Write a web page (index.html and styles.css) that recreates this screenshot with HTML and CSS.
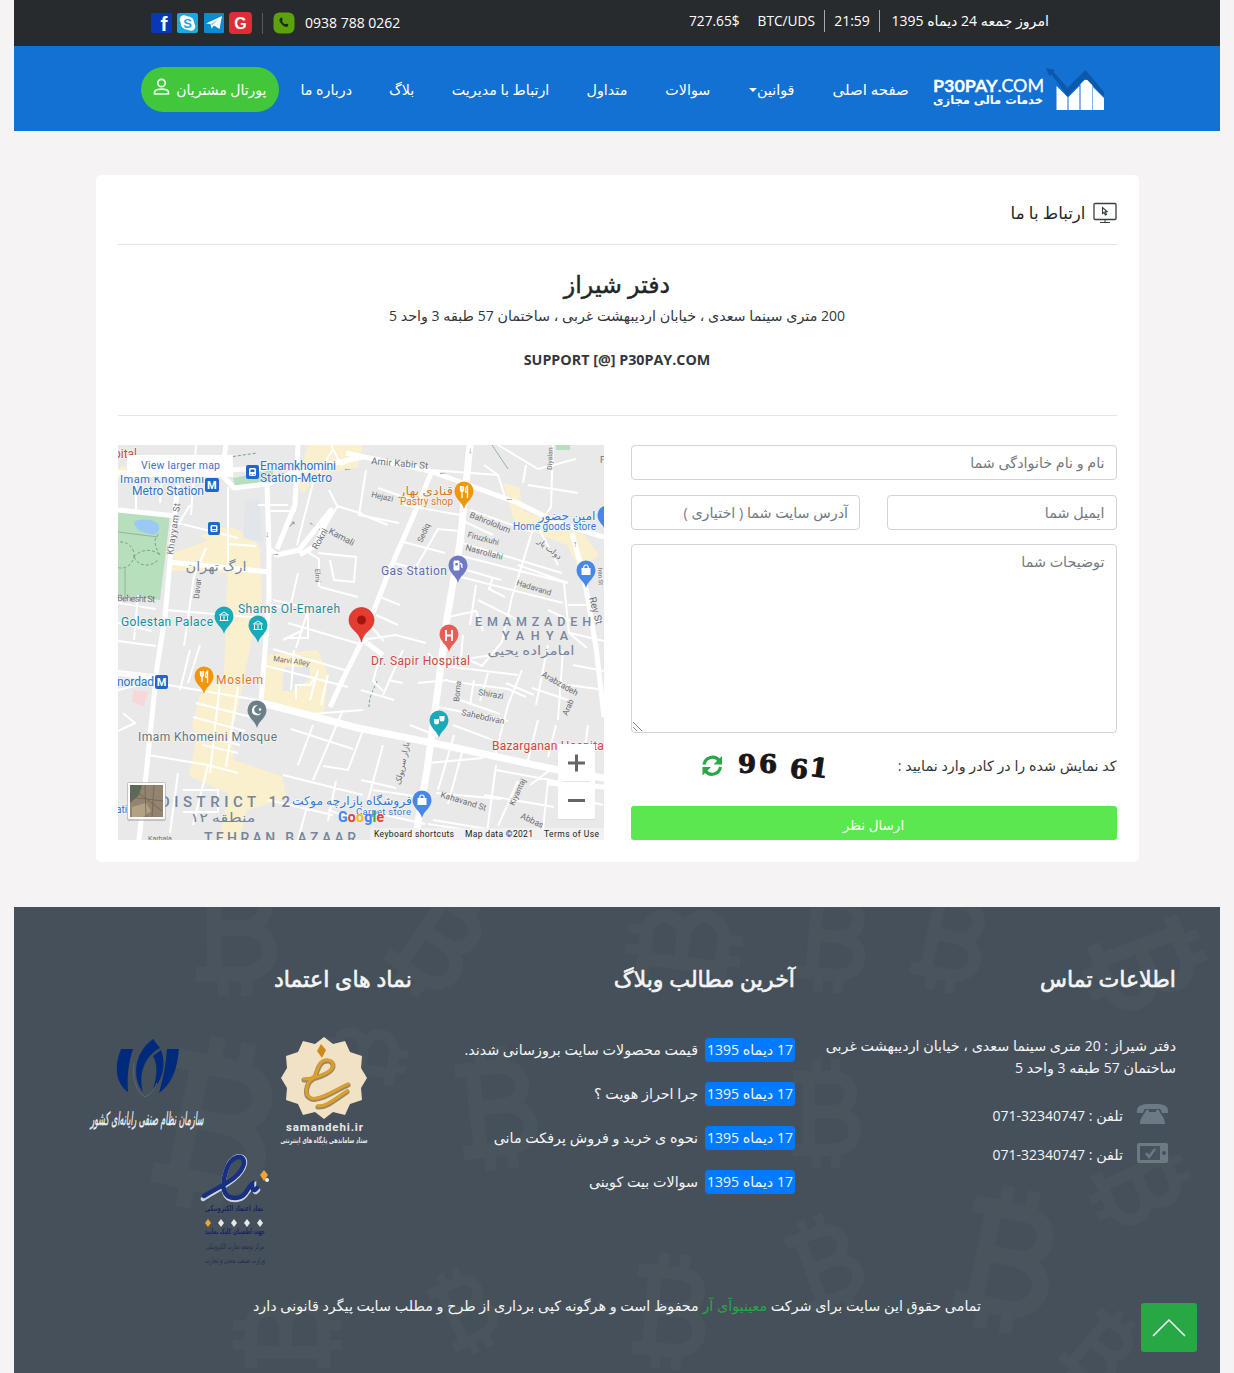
FILE: index.html
```html
<!DOCTYPE html>
<html lang="fa" dir="rtl">
<head>
<meta charset="utf-8">
<title>P30PAY.COM</title>
<link rel="stylesheet" href="styles.css">
</head>
<body>
<div class="page">
  <div class="topbar">
    <div class="today">
      <span class="date">امروز جمعه <b>24</b> دیماه <b>1395</b></span>
      <span class="clock"><b>21:59</b></span>
      <span class="rate" dir="ltr"><b>727.65$</b><b>BTC/UDS</b></span>
    </div>
    <div class="contact" dir="ltr">
      <svg class="social" width="101" height="24" viewBox="0 0 101 24">
        <rect x="0" y="2" width="21" height="20" rx="2" fill="#0a37b8"/>
        <text x="13" y="20" class="ic" font-size="21">f</text>
        <rect x="26" y="2" width="21" height="20" rx="2" fill="#19a9dc"/>
        <circle cx="36.5" cy="12" r="6.8" fill="#fff"/><circle cx="33" cy="8.500" r="4.300" fill="#fff"/><circle cx="40" cy="15.500" r="4.300" fill="#fff"/>
        <text x="36.500" y="17" class="ic blue" font-size="13">S</text>
        <rect x="53" y="2" width="20" height="20" rx="1" fill="#0c8ccf"/>
        <path d="M55 12.500 71 5l-2.500 13-5.500-3.500-2.500 3-1-4.500z" fill="#fff"/><path d="m59.500 13 8-5-6 6.500z" fill="#a9d4ec"/>
        <rect x="78" y="1" width="23" height="22" rx="4" fill="#df2c36"/>
        <text x="89.500" y="17.500" class="ic" font-size="16">G</text>
      </svg>
      <i class="bar"></i>
      <svg width="22" height="22" viewBox="0 0 22 22"><rect width="21" height="21" x=".5" y=".5" rx="6" fill="#5ba30b"/><path d="M7 6.500c1-1.500 2-1 2.500.5s-.7 1.500-.2 2.500 1.200 2 2.300 2.500 1.500-.8 2.700-.2 1.500 1.500.2 2.600c-1.500 1.200-4 .2-6-2.300S5.700 8.200 7 6.500z" fill="#1d2b12"/></svg>
      <b class="phone">0938 788 0262</b>
    </div>
  </div>

  <nav class="navbar">
    <svg class="logo" width="174" height="50" viewBox="0 0 174 50" direction="ltr">
      <path d="M125.500 21l11 11V45h-11zM137.500 32l11-11v24h-11zM149.500 19l4-4h3l5 5v25h-12zM162 22l11 11v12h-11z" fill="#fff"/>
      <path d="M115 3l9 2-1.500 1.800 14 16L154.500 5 173 27v5L154.500 13l-18 18.500L120.500 9.500l-2 2z" fill="#0c58ad"/>
      <text x="2" y="26.500" textLength="111" lengthAdjust="spacingAndGlyphs" class="brand"><tspan font-weight="700">P30PAY</tspan>.COM</text>
      <text x="57" y="38.500" textLength="110" lengthAdjust="spacingAndGlyphs" class="tag" text-anchor="middle">خدمات مالی مجازی</text>
    </svg>
    <a class="w77">صفحه اصلی</a>
    <a class="w47">قوانین<i class="caret"></i></a>
    <a class="w45">سوالات</a>
    <a class="w41">متداول</a>
    <a class="w97">ارتباط با مدیریت</a>
    <a class="w26">بلاگ</a>
    <a class="w50">درباره ما</a>
    <a class="portal">پورتال مشتریان
      <svg width="17" height="18" viewBox="0 0 17 18" fill="none" stroke="#e9fbe6" stroke-width="1.700"><circle cx="8.500" cy="5" r="3.700"/><path d="M1.500 16v-1.500c0-2 3-3.300 7-3.300s7 1.300 7 3.300V16z" stroke-linejoin="round"/></svg>
    </a>
  </nav>

  <main class="card">
    <h1 class="title">
      <svg width="24" height="22" viewBox="0 0 24 22" fill="none" stroke="#3b3f42"><rect x="1" y="1.500" width="22" height="16" rx="1" stroke-width="1.300"/><path d="M12 18v2M7 20.500h10"/><path d="M9.500 5.500v6l1.500-1.200 1.300 2.700 1.200-.6-1.200-2.600h2z" stroke-width="1.100"/></svg>
      <span>ارتباط با ما</span>
    </h1>
    <section class="office">
      <h2>دفتر شیراز</h2>
      <p class="addr"><b>200</b> متری سینما سعدی ، خیابان اردیبهشت غربی ، ساختمان <b>57</b> طبقه <b>3</b> واحد <b>5</b></p>
      <p class="mail" dir="ltr">SUPPORT [@] P30PAY.COM</p>
    </section>
    <section class="columns">
      <form class="form">
        <div class="field">نام و نام خانوادگی شما</div>
        <div class="pair">
          <div class="field">ایمیل شما</div>
          <div class="field">آدرس سایت شما ( اختیاری )</div>
        </div>
        <div class="field area">توضیحات شما
          <svg class="grip" width="9" height="9" viewBox="0 0 9 9" stroke="#777" stroke-width=".9"><path d="M0 0l9 9M0 5l4 4"/></svg>
        </div>
        <div class="captcha">
          <span>کد نمایش شده را در کادر وارد نمایید :</span>
          <svg width="128" height="32" viewBox="0 0 128 32" direction="ltr">
            <g fill="none" stroke="#28a745" stroke-width="3.200"><path d="M2 14.500C3.500 6.500 13 5 17 10.500M18.500 17C17 25 7.500 26.500 3.500 21"/></g>
            <path d="M20 6v8.500h-8.500zM.5 25.500V17H9z" fill="#28a745"/>
            <g class="code"><text x="36" y="23">9</text><text x="57" y="23">6</text><text x="88" y="28" transform="rotate(5 97 18)">6</text><text x="108" y="27" transform="rotate(8 118 18)">1</text></g>
          </svg>
        </div>
        <a class="send">ارسال نظر</a>
      </form>

      <svg class="map" width="486" height="395" viewBox="0 0 486 395" direction="ltr">
        <rect width="486" height="395" fill="#e9e9ea"/>
        <!-- commercial areas -->
        <g fill="#fdf1c9">
          <path d="M190 0h55l-5 22-40 8-14 18-8-8zM0 22l58-4v10L0 36zM90 95l-8-4 20-8 14 0 18 8 8 12 2 65-12 4-3-40-34-6-42 0 3-18zM110 118l25 5 4 45-20 100-12 40-28-10-5-18 8-30 24-20zM150 210l50-5 10 25-4 40-40-5-25-15zM85 262l26 8 5 45 48 16 5 22-40 12-8 30h-20l10-46-40-18zM385 38l16 4 4 24 60 22 16 22-20 14-12-24-52-20z" opacity=".85"/>
        </g>
        <path d="M166 222h26v12l-18 12h-10z" fill="#e6e7ea"/>
        <path d="M0 67l52 4-10 84-42-5zM115 33l40-8v12l-38 4zM438 0h14v5h-14z" fill="#b7dfbc"/>
        <path d="M16 77c7-5 24-2 25 4s-3 10-9 8-14-2-16-12z" fill="#9bc8f5"/>
        <path d="M127 56l14-3 4 45-20-5z" fill="#e2e5ea"/>
        <path d="M15 245l15 2-4 15-12-5z" fill="#f7d8d8"/>
        <g fill="none" stroke="#71a780" stroke-dasharray="3 2"><circle cx="3" cy="110" r="13"/><path d="M16 112c6-8 18-9 26-2M16 112c5 10 17 11 25 2M42 110c-5-8-8-16 0-22M105 13l34-5M192 78l12 8M259 236c-5 12-8 16-8 26"/></g>
        <g fill="none" stroke="#91b69b"><path d="M7 152V122M0 87l40 5M374 0l16 24"/></g>
        <!-- local streets -->
        <g fill="none" stroke="#fff" stroke-width="2">
          <path d="M18 30v36M44 32l-2 26M78 0l-5 70M110 42v76M60 78l60 15M72 60L60 80M110 99l28 2M88 103l-12 28-10 70M48 165l95 8M20 150l-4 45M140 60h30M152 66h26M195 38l-16 62M211 45l8 16 26 8M220 60l-22 38-7 10 10 6 0 28M200 108l38 4-2 25-20-2-4-20M180 128l-8 35-20-3M202 142l38 10M190 165l-12 38M170 178l75 22M155 155l35 8v30h-20M213 0l10 20 22-10M195 38l20-34"/>
          <path d="M0 158l38 6M0 178l34 8M0 196l38 5M0 226l36 4M0 245l34-8M5 268l12 10-17 8M50 240l90 15M72 205l-10 40M82 200l-12 38M102 238l-10 90M120 242l-12 80M78 258l55 14M75 272l52 14M72 288l50 12M85 300l35 8M30 310l60 10 30 8M90 320l-15 60M60 328l-8 60M65 345h35v22H65M145 220l85 22M155 204l75 22M176 205l-3 40M200 225l-8 30M178 254l0-14 14 0 8-12M165 195l20-10M210 230l-7 30M180 270l65-5M173 284l62 20M195 280l-15 40M225 265l-30 70M165 330l80 20M150 355l65 15M192 350l-12 45M218 336l-8 40"/>
          <path d="M248 25l-7 45 40 8M245 70l25 10M260 43l40 14M286 60l56 10M282 96l45 12M275 118l40 10M298 122l22-38 22 2M262 152l20 8M258 170l22 10M243 195l35-5 30 8M252 180l14 16M312 25l68 5 8 25M366 20l14 10M352 65l62 22-20 65-10 45-20 24-15-7M345 76l30 14M344 98l100 30M340 110l105 27M335 130l110 28M420 82l20 38M400 120l50 18M375 132l-4 12 16 8M360 155l40 20M348 125l35 10M358 140l-6 40M435 0l-2 62-18 25M410 40l50 8M380 0l40 24 38-10M408 20l-3 18M446 138l5 50 18 15M450 160h20M430 165l25 12M470 175l14 2M330 172l28-6 7 20M345 190l-2 22M262 212l-7 24 10 10M270 235l15 3M243 245l33 10M285 205l-20 45M310 208l10 10 55-8M318 220l82 10M300 238l30-3M330 236l60 8 18 8M356 235l-4 25M370 228l-8 28M342 255l40 14M320 262l70 14M335 280l40 15M292 280l30 12M310 318l55-5M318 348l65 6M336 290l-16 55M345 304l-15 55M378 320l-10 75M388 238l28 12M404 225l-14 35-14 55M430 200l-12 60M445 205l-5 70M414 243l36 12M450 240l30 4M420 275l-10 40M438 280l-8 32M378 325l65 12M412 340l20-15 40 10M366 350l70 12M400 336l-20 45M430 335l-5 50M445 350l40 10M470 280l-8 60M452 188l34 8M455 220l31 6M245 285l-15 40-25-4M243 335l35 8M265 300l-15 55M255 345l55 8M245 365l62 14M315 375l60 10M350 385l-40-6M240 375l-30-10"/>
        </g>
        <!-- main roads -->
        <g fill="none" stroke="#fff" stroke-width="5" stroke-linejoin="round">
          <path d="M0 65l58 6M60 40l-5 42-8 90-8 50-12 118-6 55M108 0l-4 30 12 13 33-4 2 65 8 6 22-5 32-40-15 35-16 10M151 104l0 50-8 103M50 117l102 10M180 0l-3 60-18 44M0 28h58M60 28l85-5M148 40l30-14 67-14M0 228l36 6"/>
          <path d="M228 8l84 18 88 32 40 20 46 14M314 26l-20 48-22 50-14 36-16 40-16 32-14 30M454 88l12 44 12 70 8 70M245 195l20 15M430 338l56 4"/>
        </g>
        <g fill="none" stroke="#fff" stroke-width="7"><path d="M352 0l-10 98-13 75-9 70-11 82-12 70M140 257l100 26 80 16 120 26 46 8"/></g>
        <g fill="#848ba1" font-size="9" class="r"><text x="147" y="92">↓</text><text x="170" y="82">↗</text><text x="153" y="111">→</text><text x="320" y="30">←</text><text x="387" y="56">←</text><text x="455" y="102">↑</text><text x="225" y="26">←</text><text x="350" y="8">↓</text></g>
        <!-- street names -->
        <g class="street">
          <text transform="translate(55 110) rotate(-82)" textLength="52">Khayyam St</text><text transform="translate(-1 156) rotate(2)" textLength="38">Behesht St</text>
          <text transform="translate(81 154) rotate(-84)" font-size="8">Davar</text><text transform="translate(199 105) rotate(-60)" font-size="9">Rokni</text><text transform="translate(210 88) rotate(28)" font-size="9">Kamali</text><text transform="translate(197 124) rotate(88)" font-size="7">Elmi</text>
          <text transform="translate(253 19) rotate(5)" textLength="57" font-size="9.500">Amir Kabir St</text><text transform="translate(253 52) rotate(12)" font-size="8">Hejazi</text><text transform="translate(304 98) rotate(-66)" font-size="8">Sediq</text>
          <text transform="translate(351 72) rotate(22)" font-size="8.500">Bahrololum</text><text transform="translate(349 92) rotate(15)" font-size="8">Firuzkuhi</text><text transform="translate(347 105) rotate(15)" font-size="8.500">Nasrollahi</text><text transform="translate(398 140) rotate(17)" font-size="8">Hadavand</text>
          <text transform="translate(434 25) rotate(-88)" font-size="7">Diyalan</text><text transform="translate(471 153) rotate(75)" font-size="10">Rey St</text><text transform="translate(480 123) rotate(87)" font-size="6">Iran St</text><text x="482" y="18">F</text>
          <text transform="translate(155 216) rotate(8)" font-size="7.500">Marvi Alley</text><text transform="translate(341 257) rotate(-84)" font-size="8">Borna</text><text transform="translate(360 250) rotate(9)" font-size="8.500">Shirazi</text><text transform="translate(343 270) rotate(12)" font-size="8.500">Sahebdivan</text><text transform="translate(423 231) rotate(30)" font-size="8.500">Arabzadeh</text><text transform="translate(449 271) rotate(-65)" font-size="8">Arab</text><text transform="translate(322 352) rotate(17)" font-size="8.500">Kahavand St</text><text transform="translate(396 361) rotate(-65)" font-size="8">Kiyantaj</text><text transform="translate(402 373) rotate(25)" font-size="8.500">Abbas</text><text x="30" y="396" font-size="7">Karbala</text>
          <text transform="translate(287 319) rotate(-78)" font-size="8" text-anchor="middle">بازار سرپولک</text><text transform="translate(430 106) rotate(38)" font-size="8" text-anchor="middle">دولت یار</text>
        </g>
        <!-- districts -->
        <g class="district">
          <text x="98" y="126" text-anchor="middle" textLength="61" lengthAdjust="spacingAndGlyphs" font-size="13">ارگ   تهران</text>
          <text x="357" y="181" textLength="116">EMAMZADEH</text><text x="384" y="195" textLength="66">YAHYA</text><text x="413" y="210" text-anchor="middle" textLength="87" lengthAdjust="spacingAndGlyphs">امامزاده یحیی</text>
          <text x="42" y="362" textLength="130" font-size="15">DISTRICT 12</text><text x="105" y="377" text-anchor="middle" textLength="65" lengthAdjust="spacingAndGlyphs">منطقه ۱۲</text><text x="86" y="398" textLength="152" font-size="14">TEHRAN BAZAAR</text>
        </g>
        <!-- places -->
        <g class="place">
          <g fill="#2f72c8"><text x="2" y="38" font-size="11" textLength="84">Imam Khomeini</text><text x="14" y="50" textLength="72">Metro Station</text><text x="142" y="25" textLength="76">Emamkhomini</text><text x="142" y="37" textLength="72">Station-Metro</text><text x="-1" y="241" textLength="37">nordad</text><text x="-2" y="368" font-size="10">ati</text></g>
          <g fill="#198d9b"><text x="3" y="181" textLength="92">Golestan Palace</text><text x="120" y="168" textLength="102">Shams Ol-Emareh</text></g>
          <g fill="#cf4543"><text x="253" y="220" textLength="99">Dr. Sapir Hospital</text><text x="374" y="305" textLength="115">Bazarganan Hospital</text><text x="-4" y="13">pital</text></g>
          <g fill="#d97b1d"><text x="308" y="50" text-anchor="middle" textLength="54" lengthAdjust="spacingAndGlyphs">قنادی بهار</text><text x="282" y="60" font-size="10" textLength="53">Pastry shop</text><text x="98" y="239" textLength="47">Moslem</text></g>
          <g fill="#3778d0"><text x="449" y="75" text-anchor="middle" textLength="57" lengthAdjust="spacingAndGlyphs">امین حضور</text><text x="395" y="85" font-size="10" textLength="83">Home goods store</text><text x="234" y="360" text-anchor="middle" textLength="120" lengthAdjust="spacingAndGlyphs">فروشگاه بازارچه موکت</text><text x="238" y="370" font-size="9.500" textLength="55">Carpet store</text></g>
          <text x="263" y="130" textLength="66" fill="#6269b5">Gas Station</text><text x="20" y="296" textLength="139" fill="#65747c">Imam Khomeini Mosque</text>
        </g>
        <!-- transit badges -->
        <g fill="#1b69cf"><rect x="87" y="33" width="14" height="14" rx="2"/><rect x="128" y="20" width="13" height="14" rx="2"/><rect x="90" y="77" width="12" height="13" rx="2"/><rect x="37" y="230" width="13" height="14" rx="2"/></g>
        <g fill="#fff" class="r" font-weight="700" font-size="11"><text x="89" y="44">M</text><text x="38.700" y="241">M</text></g>
        <g fill="#fff"><rect x="131" y="23" width="7" height="8" rx="1.500"/><rect x="92.500" y="80" width="7" height="7" rx="1.500"/></g>
        <g fill="#1b69cf"><path d="M132.500 24.500h4v2.500h-4zM132.500 29h1v1h-1zM135.500 29h1v1h-1zM94 81.500h4V84h-4zM94 85.200h4v.8h-4z"/></g>
        <!-- pins -->
        <defs><path id="pin" d="M0 17C-1.500 10-9.500 7-9.500-1A9.500 9.500 0 0 1 9.500-1C9.500 7 1.500 10 0 17z"/></defs>
        <use href="#pin" x="106" y="172" fill="#18aabb"/><use href="#pin" x="140" y="181" fill="#18aabb"/>
        <g fill="none" stroke="#fff"><path d="M101.500 170l4.500-3 4.500 3zM102.500 171v4M106 171v4M109.500 171v4M101.500 175.500h9M135.500 179l4.500-3 4.500 3zM136.500 180v4M140 180v4M143.500 180v4M135.500 184.500h9"/></g>
        <use href="#pin" x="346" y="47" fill="#ef9708"/><use href="#pin" x="86" y="232" fill="#ef9708"/>
        <path d="M342.500 41v4q0 1.500 1.500 1.500V53M344 41v5M345.500 41v4q0 1.500-1.500 1.500M349.500 53V41q-2 1-2 6h2M82.500 226v4q0 1.500 1.500 1.500V237M84 226v5M85.500 226v4q0 1.500-1.500 1.500M89.500 238v-12q-2 1-2 6h2" fill="none" stroke="#fff" stroke-width="1.300"/>
        <use href="#pin" x="340" y="121" fill="#7079c4"/><path d="M336 116h5v9h-5zM342 118l2 1v4M337.500 117.500h2" fill="#fff" stroke="#fff"/><path d="M337.300 118h2.500v2.500h-2.500z" fill="#7079c4"/>
        <use href="#pin" x="468" y="126" fill="#4688e8"/><path d="M463.500 123h9v7h-9z" fill="#fff"/><path d="M465.700 123c0-4 4.600-4 4.600 0" fill="none" stroke="#fff" stroke-width="1.200"/>
        <use href="#pin" x="489" y="71" fill="#4688e8"/>
        <use href="#pin" x="304" y="356" fill="#4688e8"/><path d="M299.500 353h9v7h-9z" fill="#fff"/><path d="M301.700 353c0-4 4.600-4 4.600 0" fill="none" stroke="#fff" stroke-width="1.200"/>
        <use href="#pin" x="331" y="190" fill="#e85d55"/><path d="M328 185v11M334 185v11M328 190.500h6" stroke="#fff" stroke-width="1.800"/>
        <use href="#pin" x="321" y="276" fill="#18aabb"/><path d="M316 274h5v3a2.500 2.500 0 0 1-5 0zM321.500 271h5v3a2.500 2.500 0 0 1-5 0z" fill="#fff"/>
        <use href="#pin" x="139" y="266" fill="#6b7f89"/><path d="M140 260.500a5 5 0 1 0 3.500 7 4.200 4.200 0 1 1-3.500-7z" fill="#fff"/><circle cx="142" cy="264.500" r="1.200" fill="#fff"/>
        <path d="M243.500 197c-2-11-12.500-12-12.500-22a12.500 12.500 0 0 1 25 0c0 10-10.500 11-12.500 22z" fill="#e43c31" stroke="#bf352c" stroke-width=".7"/><circle cx="243.500" cy="175" r="4.500" fill="#a4150f"/>
        <!-- map controls -->
        <g class="r" font-size="14"><text x="220" y="377" textLength="46" font-weight="700"><tspan fill="#4285f4">G</tspan><tspan fill="#e54135">o</tspan><tspan fill="#f5ba16">o</tspan><tspan fill="#4285f4">g</tspan><tspan fill="#34a853">l</tspan><tspan fill="#e54135">e</tspan></text></g>
        <rect x="252" y="383" width="234" height="12" fill="#f2f2f2" opacity=".85"/>
        <g class="r" font-size="8.500" fill="#222"><text x="256" y="392" textLength="80">Keyboard shortcuts</text><text x="347" y="392" textLength="68">Map data ©2021</text><text x="426" y="392" textLength="55">Terms of Use</text></g>
        <rect x="9" y="10" width="106" height="22" fill="#fff"/><text x="23" y="24" class="r" font-size="10.500" textLength="79" fill="#4a6ecb">View larger map</text>
        <rect x="440" y="300" width="37" height="75" rx="1" fill="#c9c9c9" opacity=".5"/><rect x="440" y="299" width="37" height="75" rx="1" fill="#fff"/><path d="M445 336.500h27" stroke="#e3e3e3"/><path d="M450 318h17M458.500 309.500v17M450 355.500h17" stroke="#666" stroke-width="3"/>
        <rect x="9" y="337" width="39" height="39" rx="2" fill="#aaa" opacity=".6"/><rect x="10" y="338" width="37" height="36" fill="#fff"/><rect x="12" y="340" width="33" height="32" fill="#93836f"/><path d="M12 340h12l-3 10-9 8z" fill="#5d6858"/><path d="M14 362l14-4 5 8-8 6H14z" fill="#b3a184"/><path d="M27 340l1 32M12 352l33 4M36 340l-2 32M18 346l26 20" stroke="#6d6356" stroke-width=".8"/>
      </svg>
    </section>
  </main>

  <footer class="footer">
    <svg class="coins" width="1206" height="466" viewBox="14 907 1206 466">
      <defs><g id="coin" fill="none" stroke="#49545c" stroke-width="17"><path d="M-44-48H8C42-48 42-2 6-2H-22M6-2C50-2 48 49 8 49H-44M-23-48V49"/><path d="M-13-72v24M13-72v24M-13 49v24M13 49v24" stroke-width="13"/></g></defs>
      <use href="#coin" transform="translate(235 930) scale(.9)"/><use href="#coin" transform="translate(438 942) rotate(35) scale(.8)"/><use href="#coin" transform="translate(216 1125) rotate(12) scale(1.200)"/><use href="#coin" transform="translate(364 1055) rotate(-80) scale(.6)"/><use href="#coin" transform="translate(496 1108) rotate(-6) scale(.85)"/><use href="#coin" transform="translate(287 1335) rotate(-90) scale(.75)"/><use href="#coin" transform="translate(465 1310) rotate(-25) scale(.6)"/>
      <use href="#coin" transform="translate(684 945) rotate(-83) scale(.8)"/><use href="#coin" transform="translate(832 938) rotate(5) scale(.75)"/><use href="#coin" transform="translate(950 938) rotate(12) scale(.75)"/><use href="#coin" transform="translate(1145 965) rotate(70) scale(.85)"/><use href="#coin" transform="translate(826 1113) scale(.75)"/><use href="#coin" transform="translate(1007 1259) rotate(12)"/><use href="#coin" transform="translate(826 1265) rotate(-20) scale(.7)"/><use href="#coin" transform="translate(670 1311) rotate(5) scale(.8)"/><use href="#coin" transform="translate(1140 1187) rotate(65) scale(.7)"/><use href="#coin" transform="translate(1100 1350) rotate(40) scale(.6)"/>
    </svg>
    <div class="fcols">
      <section class="info">
        <h3>اطلاعات تماس</h3>
        <p>دفتر شیراز : <b>20</b> متری سینما سعدی ، خیابان اردیبهشت غربی<br>ساختمان <b>57</b> طبقه <b>3</b> واحد <b>5</b></p>
        <div class="tel"><svg width="33" height="22" viewBox="0 0 33 22" fill="#6c7a86"><path d="M1 10C-.5 1 8 1 16.500 1S33.500 1 32 10h-6c-1-2-.5-3-2-4H9C7.500 7 8 8 7 10z"/><path d="M10 7h3v2h7V7h3c1 4 6 7 6 14H4c0-7 5-10 6-14z"/></svg><span>تلفن : <b dir="ltr">071-32340747</b></span></div>
        <div class="tel"><svg width="33" height="22" viewBox="0 0 33 22"><path fill="#6c7a86" fill-rule="evenodd" d="M3 1h27q2 0 2 2v16q0 2-2 2H3q-2 0-2-2V3q0-2 2-2zM4 4v14h20V4z"/><circle cx="28" cy="11" r="2" fill="#46505a"/><path d="M10 11l3 4 6-8" fill="none" stroke="#6c7a86" stroke-width="2.500"/></svg><span>تلفن : <b dir="ltr">071-32340747</b></span></div>
      </section>
      <section class="blog">
        <h3>آخرین مطالب وبلاگ</h3>
        <div class="post"><em><b>17</b> دیماه <b>1395</b></em><span>قیمت محصولات سایت بروزسانی شدند.</span></div>
        <div class="post"><em><b>17</b> دیماه <b>1395</b></em><span>جرا احراز هویت ؟</span></div>
        <div class="post"><em><b>17</b> دیماه <b>1395</b></em><span>نحوه ی خرید و فروش پرفکت مانی</span></div>
        <div class="post"><em><b>17</b> دیماه <b>1395</b></em><span>سوالات بیت کوینی</span></div>
      </section>
      <section class="trust">
        <h3>نماد های اعتماد</h3>
        <svg class="seals" width="290" height="240" viewBox="85 1035 290 240" direction="ltr">
          <path d="M121 1052h12c-5 15-6 28-5 43-11-8-15-23-7-43zM167 1052h12c-2 18-5 33-20 44 4-14 7-29 8-44zM153 1042l7 9c-15 8-22 25-17 44-10-12-11-38 10-53zM161 1053c5 12 3 28-8 40 4-14 5-26 0-34z" fill="#002b7d"/>
          <path d="M134 1066c-2 16 2 28 11 34 6-3 9-7 12-14" fill="none" stroke="#5d6874"/>
          <text x="147" y="1128" text-anchor="middle" class="nast" textLength="113" lengthAdjust="spacingAndGlyphs">سازمان نظام صنفی رایانه‌ای کشور</text>
          <path d="M324 1040l9 7 12-3 5 11 12 4-1 12 6 10-6 10 1 12-12 4-5 11-12-3-9 7-9-7-12 3-5-11-12-4 1-12-6-10 6-10-1-12 12-4 5-11 12 3z" fill="#f1e2c5"/>
          <path d="M321 1047l5 6-4 8-5-7z" fill="#ce8a19"/>
          <g fill="none" stroke-linecap="round"><path d="M304 1083c9 0 28-6 29-13s-9-8-13-2-3 12-8 15-9 16-1 19 24-8 37-14M318 1110c8 1 17-7 29-15" stroke="#9c8863" stroke-width="5"/><path d="M304 1082c9 0 28-6 29-13s-9-8-13-2-3 12-8 15-9 16-1 19 24-8 37-14M318 1109c8 1 17-7 29-15" stroke="#dda02b" stroke-width="3"/></g>
          <text x="286" y="1134" class="r" font-size="11.500" font-weight="700" fill="#e6e8ea" textLength="77">samandehi.ir</text>
          <text x="324" y="1146" text-anchor="middle" font-size="8" font-weight="700" fill="#e6e8ea" class="fa" textLength="87" lengthAdjust="spacingAndGlyphs">ستاد ساماندهی پایگاه های اینترنتی</text>
          <g fill="none" stroke-linecap="round"><path d="M203 1202c14-9 40-20 42-36 0-11-14-9-19 8s-3 29 9 29 12-11 19-15c0 7 1 9 4 5" stroke="#cfd3e5" stroke-width="4.500"/><path d="M204 1199c14-9 38-18 40-33 0-10-13-8-18 8s-3 27 9 27 12-11 17-14c0 6 2 8 5 4" stroke="#17307f" stroke-width="4.500"/></g>
          <path d="M264 1173l4 5-4 6-4-6z" fill="#f3a32f"/><circle cx="267" cy="1183" r="2" fill="#eee"/>
          <g class="fa seal-text"><text x="234" y="1214" textLength="58" lengthAdjust="spacingAndGlyphs">نماد اعتماد الکترونیکی</text><text x="235" y="1237" textLength="60" lengthAdjust="spacingAndGlyphs">جهت اطمینان کلیک نمایید</text><text x="235" y="1252" textLength="58" lengthAdjust="spacingAndGlyphs" class="dim">مرکز توسعه تجارت الکترونیکی</text><text x="235" y="1266" textLength="60" lengthAdjust="spacingAndGlyphs" class="dim">وزارت صنعت معدن و تجارت</text></g>
          <path d="M208 1222l3 4-3 4-3-4z" fill="#f3a32f"/><path d="M221 1222l3 4-3 4-3-4zM234 1222l3 4-3 4-3-4zM247 1222l3 4-3 4-3-4zM260 1222l3 4-3 4-3-4z" fill="#e8e8e8"/>
        </svg>
      </section>
    </div>
    <p class="copy">تمامی حقوق این سایت برای شرکت <a>معینیوآی آر</a> محفوظ است و هرگونه کپی برداری از طرح و مطلب سایت پیگرد قانونی دارد</p>
    <a class="totop"><svg width="34" height="19" viewBox="0 0 34 19" fill="none" stroke="#fff" stroke-width="1.500"><path d="M1 18L17 2l16 16"/></svg></a>
  </footer>
</div>
</body>
</html>
```
FILE: styles.css
```css
* { box-sizing: border-box; }
body { margin: 0; background: #f5f3f4; color: #212529; font: 14.300px/22px "Open Sans", "DejaVu Sans", sans-serif; }
h1, h2, h3, p { margin: 0; font-weight: 400; }
b { font-weight: 400; font-size: 14px; }
svg { display: block; flex: none; }
.page { width: 1206px; height: 1373px; margin: 0 auto; overflow: hidden; display: flex; flex-direction: column; }

.topbar { height: 46px; background: #282b2e; color: #fff; display: flex; justify-content: space-between; padding: 0 171px 0 138px; align-items: center; white-space: nowrap; }
.today { display: flex; align-items: center; height: 22px; margin-top: -4px; }
.date { width: 170px; border-left: 1px solid #aaa; font-size: 14.200px; }
.clock { width: 55px; text-align: center; border-left: 1px solid #aaa; }
.rate { display: flex; gap: 18px; padding-right: 9px; }
.rate b { font-size: 13.700px; }
.contact { display: flex; align-items: center; margin-left: -1px; }
.bar { width: 1px; height: 21px; background: #555b60; margin: 0 10px 0 10px; }
.phone { margin-left: 10px; }
.ic { font-family: "Liberation Sans", sans-serif; font-weight: 700; fill: #fff; text-anchor: middle; }
.blue { fill: #19a9dc; }

.navbar { height: 85px; background: #1371d3; color: #fff; display: flex; align-items: center; padding: 2px 115px 0 0; gap: 37.400px; white-space: nowrap; }
.navbar a { display: flex; justify-content: center; align-items: center; flex: none; }
.logo { margin-left: -15px; }
.brand { font-family: Lato, sans-serif; font-size: 17.500px; fill: #fff; stroke: #fff; stroke-width: .3px; }
.tag { font: 700 12px "DejaVu Sans", sans-serif; fill: #fff; }
.w77 { width: 76px; font-size: 15px; margin-top: -2px; }
.w47 { width: 47px; }
.w45 { width: 46px; }
.w41 { width: 41px; }
.w97 { width: 97px; }
.w26 { width: 26px; }
.w50 { width: 50px; }
.caret { border: 4px solid transparent; border-top-color: #fff; border-bottom: 0; }
.navbar .portal { width: 138px; height: 45px; border-radius: 23px; background: #42c73c; gap: 6px; margin-right: -15px; font-size: 14px; }
.portal svg { margin-top: -5px; }

.card { width: 1043px; height: 687px; margin: 44px auto 0; background: #fff; border-radius: 5px; padding: 0 22px; }
.title { height: 70px; border-bottom: 1px solid #e6e6e6; display: flex; align-items: center; gap: 7px; padding-top: 6px; font-size: 16.600px; }
.office { height: 171px; border-bottom: 1px solid #e6e6e6; text-align: center; padding-top: 23px; }
.office h2 { font-size: 23.700px; line-height: 32px; -webkit-text-stroke: .4px; }
.addr { line-height: 30px; color: #33373b; margin-top: 1px; }
.mail { font-size: 14.300px; font-weight: 700; margin-top: 18px; color: #33373b; }
.columns { display: flex; gap: 27px; padding-top: 29px; }
.form { width: 486px; display: flex; flex-direction: column; gap: 14.500px; }
.field { position: relative; flex: 0 0 35px; height: 35px; border: 1px solid #ced4da; border-radius: 4px; padding: 6px 11px; color: #737a81; white-space: nowrap; }
.pair { display: flex; gap: 27px; }
.pair .field { flex: 1; }
.form .area { flex-basis: 188.500px; }
.grip { position: absolute; left: 1px; bottom: 1px; }
.captcha { height: 44.500px; display: flex; align-items: center; padding-bottom: 7px; color: #33373b; gap: 66px; }
.captcha span { width: 221px; white-space: nowrap; }
.captcha svg { overflow: visible; }
.code { font: 900 26px "DejaVu Serif", serif; fill: #171717; stroke: #171717; stroke-width: 1px; }
.form .send { height: 34px; border-radius: 3px; background: #59e84f; color: #fff; text-align: center; padding-top: 8px; font-size: 13.500px; }
.r { font-family: Roboto, sans-serif; }
.street { font: 9px Roboto, "DejaVu Sans", sans-serif; fill: #6b6e73; }
.district { font: 500 12.500px Roboto, "DejaVu Sans", sans-serif; fill: #76859a; }
.place { font: 12px Roboto, "DejaVu Sans", sans-serif; paint-order: stroke; stroke: #f5f5f5; stroke-width: 1.500px; }

.footer { position: relative; margin-top: 45px; height: 466px; background: #46505a; color: #f4f5f6; }
.coins { position: absolute; inset: 0; }
.fcols { position: relative; display: flex; height: 374px; padding: 53px 44px 0 0; }
.fcols h3 { font-size: 22.100px; line-height: 36px; -webkit-text-stroke: .6px; white-space: nowrap; }
.info { width: 381px; }
.info p { margin: 39px 0 17px; white-space: nowrap; }
.tel { display: flex; align-items: center; height: 39px; padding-right: 7px; gap: 13px; }
.tel svg { margin-top: -3px; }
.blog { width: 383px; }
.blog h3, .trust h3 { margin-bottom: 36px; }
.post { display: flex; align-items: center; gap: 7px; height: 44px; white-space: nowrap; }
.post em { font-style: normal; background: #007bff; border-radius: 4px; width: 90px; height: 24px; line-height: 23px; text-align: center; }
.blog .post:first-of-type { margin-top: -4px; }
.trust { width: 341px; }
.seals { margin: 39px 37px 0 0; }
.trust h3 + .seals { margin-top: 6px; }
.nast { font: italic 18px "DejaVu Sans", sans-serif; fill: #f0f1f3; stroke: #f0f1f3; stroke-width: .3px; }
.fa { font-family: "DejaVu Sans", sans-serif; }
.seal-text { font-size: 8px; font-weight: 700; fill: #1a2266; text-anchor: middle; }
.dim { font-weight: 400; fill: #252d4c; }
.copy { position: relative; text-align: center; line-height: 50px; white-space: nowrap; }
.copy a { color: #28a745; }
.totop { position: absolute; right: 23px; bottom: 21px; width: 56px; height: 49px; border-radius: 3px; background: #28a745; display: flex; align-items: center; justify-content: center; }
```
